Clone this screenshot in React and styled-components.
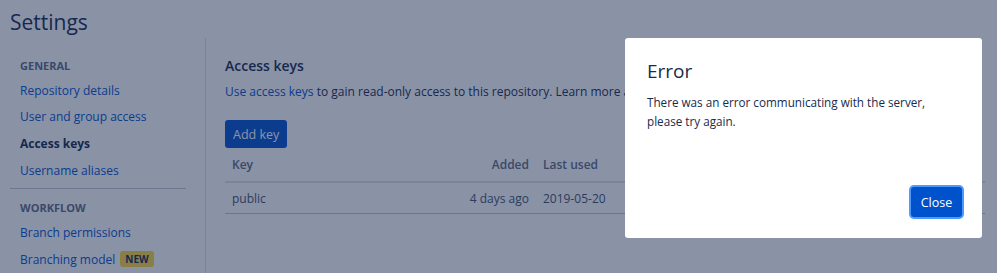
import React from "react";
import styled, { createGlobalStyle } from "styled-components";

const GlobalStyle = createGlobalStyle`
  html, body {
    margin: 0;
    padding: 0;
    background: #ffffff;
    font-family: "Open Sans", "Noto Sans", sans-serif;
    color: #172b4d;
    overflow: hidden;
  }
`;

const Page = styled.div`
  width: 997px;
  height: 273px;
  padding: 0 0 0 10px;
  box-sizing: border-box;
`;

const Title = styled.h1`
  margin: 0;
  padding-top: 8px;
  font-size: 21px;
  font-weight: 500;
  line-height: 28px;
  color: #172b4d;
`;

const Layout = styled.div`
  display: flex;
  margin-top: 2px;
`;

const Sidebar = styled.nav`
  width: 196px;
  padding-top: 21px;
  border-right: 1px solid #dfe1e6;
  box-sizing: border-box;
  height: 240px;
`;

const SectionLabel = styled.div`
  padding-left: 10px;
  font-size: 11px;
  font-weight: 700;
  color: #5e6c84;
  line-height: 14px;
  margin-bottom: 4px;
`;

const NavItem = styled.a`
  display: flex;
  align-items: center;
  gap: 5px;
  padding-left: 10px;
  height: 26.6px;
  font-size: 12px;
  text-decoration: none;
  color: ${p => (p.$active ? "#172b4d" : "#0052cc")};
  font-weight: ${p => (p.$active ? 700 : 400)};
`;

const Divider = styled.hr`
  border: none;
  border-top: 1px solid #c1c7d0;
  margin: 5px 19px 12px 0;
`;

const Badge = styled.span`
  background: #ffd740;
  color: #172b4d;
  font-size: 10px;
  font-weight: 700;
  padding: 1px 5px;
  border-radius: 3px;
  line-height: 14px;
`;

const Main = styled.main`
  flex: 1;
  padding: 18px 0 0 19px;
`;

const Heading = styled.h2`
  margin: 0;
  font-size: 14px;
  font-weight: 600;
  line-height: 20px;
`;

const Desc = styled.p`
  margin: 7px 0 0;
  font-size: 12px;
  line-height: 18px;
  color: #172b4d;
  white-space: nowrap;
  a {
    color: #0052cc;
    text-decoration: none;
  }
`;

const PrimaryButton = styled.button`
  font-family: inherit;
  font-size: 12.5px;
  color: #ffffff;
  background: #0052cc;
  border: none;
  border-radius: 3px;
  height: 28px;
  padding: 0 8px;
  white-space: nowrap;
  cursor: pointer;
`;

const AddButton = styled(PrimaryButton)`
  margin-top: 19px;
`;

const Table = styled.table`
  margin-top: 0;
  border-collapse: collapse;
  width: 760px;
  font-size: 12px;
  th {
    text-align: left;
    font-weight: 600;
    color: #5e6c84;
    height: 33px;
    padding: 0 7px;
    border-bottom: 2px solid #dfe1e6;
  }
  td {
    height: 30px;
    padding: 0 7px;
    color: #42526e;
    border-bottom: 1px solid #c1c7d0;
  }
`;

const Cell = styled.td`
  text-align: ${p => (p.$right ? "right" : "left")};
  width: ${p => p.$w || "auto"};
  white-space: nowrap;
`;

const HeadCell = styled.th`
  && {
    text-align: ${p => (p.$right ? "right" : "left")};
  }
  width: ${p => p.$w || "auto"};
  white-space: nowrap;
`;

const Blanket = styled.div`
  position: fixed;
  inset: 0;
  background: rgba(21, 37, 77, 0.5);
`;

const Dialog = styled.div`
  position: fixed;
  left: 625px;
  top: 38px;
  width: 357px;
  height: 200px;
  background: #ffffff;
  border-radius: 3px;
  box-sizing: border-box;
  padding: 20px 20px 21px 22px;
  display: flex;
  flex-direction: column;
`;

const DialogTitle = styled.h3`
  margin: 0;
  font-size: 19px;
  font-weight: 500;
  line-height: 26px;
  color: #172b4d;
`;

const DialogBody = styled.p`
  margin: 9px 0 0;
  font-size: 11.7px;
  line-height: 19px;
  color: #172b4d;
  flex: 1;
`;

const Footer = styled.div`
  display: flex;
  justify-content: flex-end;
`;

const CloseButton = styled(PrimaryButton)`
  height: 30px;
  width: 51px;
  margin-top: 1px;
  box-shadow: 0 0 0 2px #4c9aff;
`;

export default function App() {
  return (
    <>
      <GlobalStyle />
      <Page>
        <Title>Settings</Title>
        <Layout>
          <Sidebar>
            <SectionLabel>GENERAL</SectionLabel>
            <NavItem>Repository details</NavItem>
            <NavItem>User and group access</NavItem>
            <NavItem $active>Access keys</NavItem>
            <NavItem>Username aliases</NavItem>
            <Divider />
            <SectionLabel>WORKFLOW</SectionLabel>
            <NavItem>Branch permissions</NavItem>
            <NavItem>
              <span>Branching model</span>
              <Badge>NEW</Badge>
            </NavItem>
          </Sidebar>
          <Main>
            <Heading>Access keys</Heading>
            <Desc>
              <a href="#">Use access keys</a> to gain read-only access to this
              repository. Learn more about access keys.
            </Desc>
            <AddButton>Add key</AddButton>
            <Table>
              <thead>
                <tr>
                  <HeadCell $w="220px">Key</HeadCell>
                  <HeadCell $right $w="63px">Added</HeadCell>
                  <HeadCell>Last used</HeadCell>
                </tr>
              </thead>
              <tbody>
                <tr>
                  <Cell>public</Cell>
                  <Cell $right>4 days ago</Cell>
                  <Cell>2019-05-20</Cell>
                </tr>
              </tbody>
            </Table>
          </Main>
        </Layout>
      </Page>
      <Blanket />
      <Dialog role="dialog">
        <DialogTitle>Error</DialogTitle>
        <DialogBody>
          There was an error communicating with the server,
          <br />
          please try again.
        </DialogBody>
        <Footer>
          <CloseButton>Close</CloseButton>
        </Footer>
      </Dialog>
    </>
  );
}
